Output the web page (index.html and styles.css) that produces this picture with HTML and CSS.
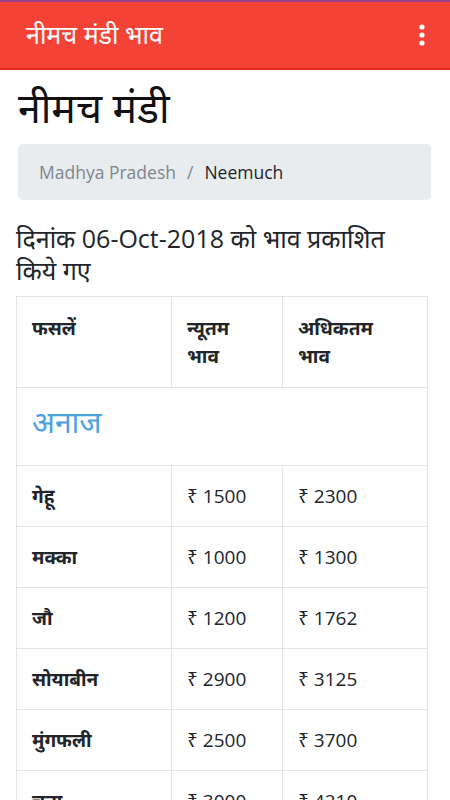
FILE: index.html
```html
<!DOCTYPE html>
<html lang="hi">
<head>
<meta charset="utf-8">
<link rel="stylesheet" href="styles.css">
</head>
<body>
<header class="appbar">
  <div class="appbar-title">नीमच मंडी भाव</div>
  <svg class="kebab" width="8" height="24" viewBox="0 0 8 24"><circle cx="4" cy="4" r="2.6" fill="#fff"/><circle cx="4" cy="12" r="2.6" fill="#fff"/><circle cx="4" cy="20" r="2.6" fill="#fff"/></svg>
</header>
<main class="content">
  <h1 class="page-title">नीमच मंडी</h1>
  <nav class="breadcrumb">
    <span class="crumb">Madhya Pradesh</span>
    <span class="sep">/</span>
    <span class="crumb active">Neemuch</span>
  </nav>
  <p class="date">दिनांक 06-Oct-2018 को भाव प्रकाशित किये गए</p>
  <table class="rates">
    <colgroup><col class="c1"><col class="c2"><col class="c3"></colgroup>
    <thead>
      <tr><th>फसलें</th><th>न्यूतम भाव</th><th>अधिकतम भाव</th></tr>
    </thead>
    <tbody>
      <tr><td colspan="3" class="cat">अनाज</td></tr>
      <tr><th>गेहू</th><td>₹ 1500</td><td>₹ 2300</td></tr>
      <tr><th>मक्का</th><td>₹ 1000</td><td>₹ 1300</td></tr>
      <tr><th>जौ</th><td>₹ 1200</td><td>₹ 1762</td></tr>
      <tr><th>सोयाबीन</th><td>₹ 2900</td><td>₹ 3125</td></tr>
      <tr><th>मुंगफली</th><td>₹ 2500</td><td>₹ 3700</td></tr>
      <tr><th>चना</th><td>₹ 3000</td><td>₹ 4210</td></tr>
    </tbody>
  </table>
</main>
</body>
</html>
```
FILE: styles.css
```css
html, body {
  margin: 0;
  padding: 0;
  background: #fff;
}
body {
  font-family: "Open Sans", "Noto Sans", sans-serif;
  color: #212529;
}
.appbar {
  height: 66px;
  background: #f44336;
  border-top: 2px solid #9c3d8c;
  border-bottom: 2px solid #e0281c;
  display: flex;
  align-items: center;
  justify-content: space-between;
  padding: 0 24px 0 26px;
}
.appbar-title {
  color: #fff;
  font-size: 25px;
  line-height: 1;
  padding-bottom: 2px;
}
.kebab {
  display: block;
}
.content {
  padding: 0 16px;
}
.page-title {
  margin: 0;
  padding: 13px 0 0 2px;
  font-size: 41px;
  font-weight: 400;
  line-height: 48px;
  color: #111;
}
.breadcrumb {
  margin: 13px 3px 0 2px;
  height: 56px;
  background: #e9ecef;
  border-radius: 5px;
  display: flex;
  align-items: center;
  padding: 0 21px;
  font-size: 17.5px;
  gap: 11px;
}
.crumb { color: #7f868c; }
.sep { color: #7f868c; }
.crumb.active { color: #212529; }
.date {
  margin: 22px 0 10px;
  font-size: 25px;
  line-height: 32px;
  color: #212529;
  padding-right: 20px;
}
.rates {
  width: 411px;
  border-collapse: collapse;
  table-layout: fixed;
  font-size: 19px;
}
.c1 { width: 155px; }
.c2 { width: 111px; }
.c3 { width: 145px; }
.rates th, .rates td {
  border: 1px solid #e2e5e9;
  padding: 16px 15px;
  line-height: 28px;
  text-align: left;
  vertical-align: top;
}
.rates th { font-weight: 700; }
.rates td { font-weight: 400; }
.rates thead th { padding: 17px 24px 17px 15px; }
.rates td.cat {
  color: #4aa3df;
  font-size: 30px;
  line-height: 44px;
  padding-top: 12px;
  padding-bottom: 21px;
}
```
